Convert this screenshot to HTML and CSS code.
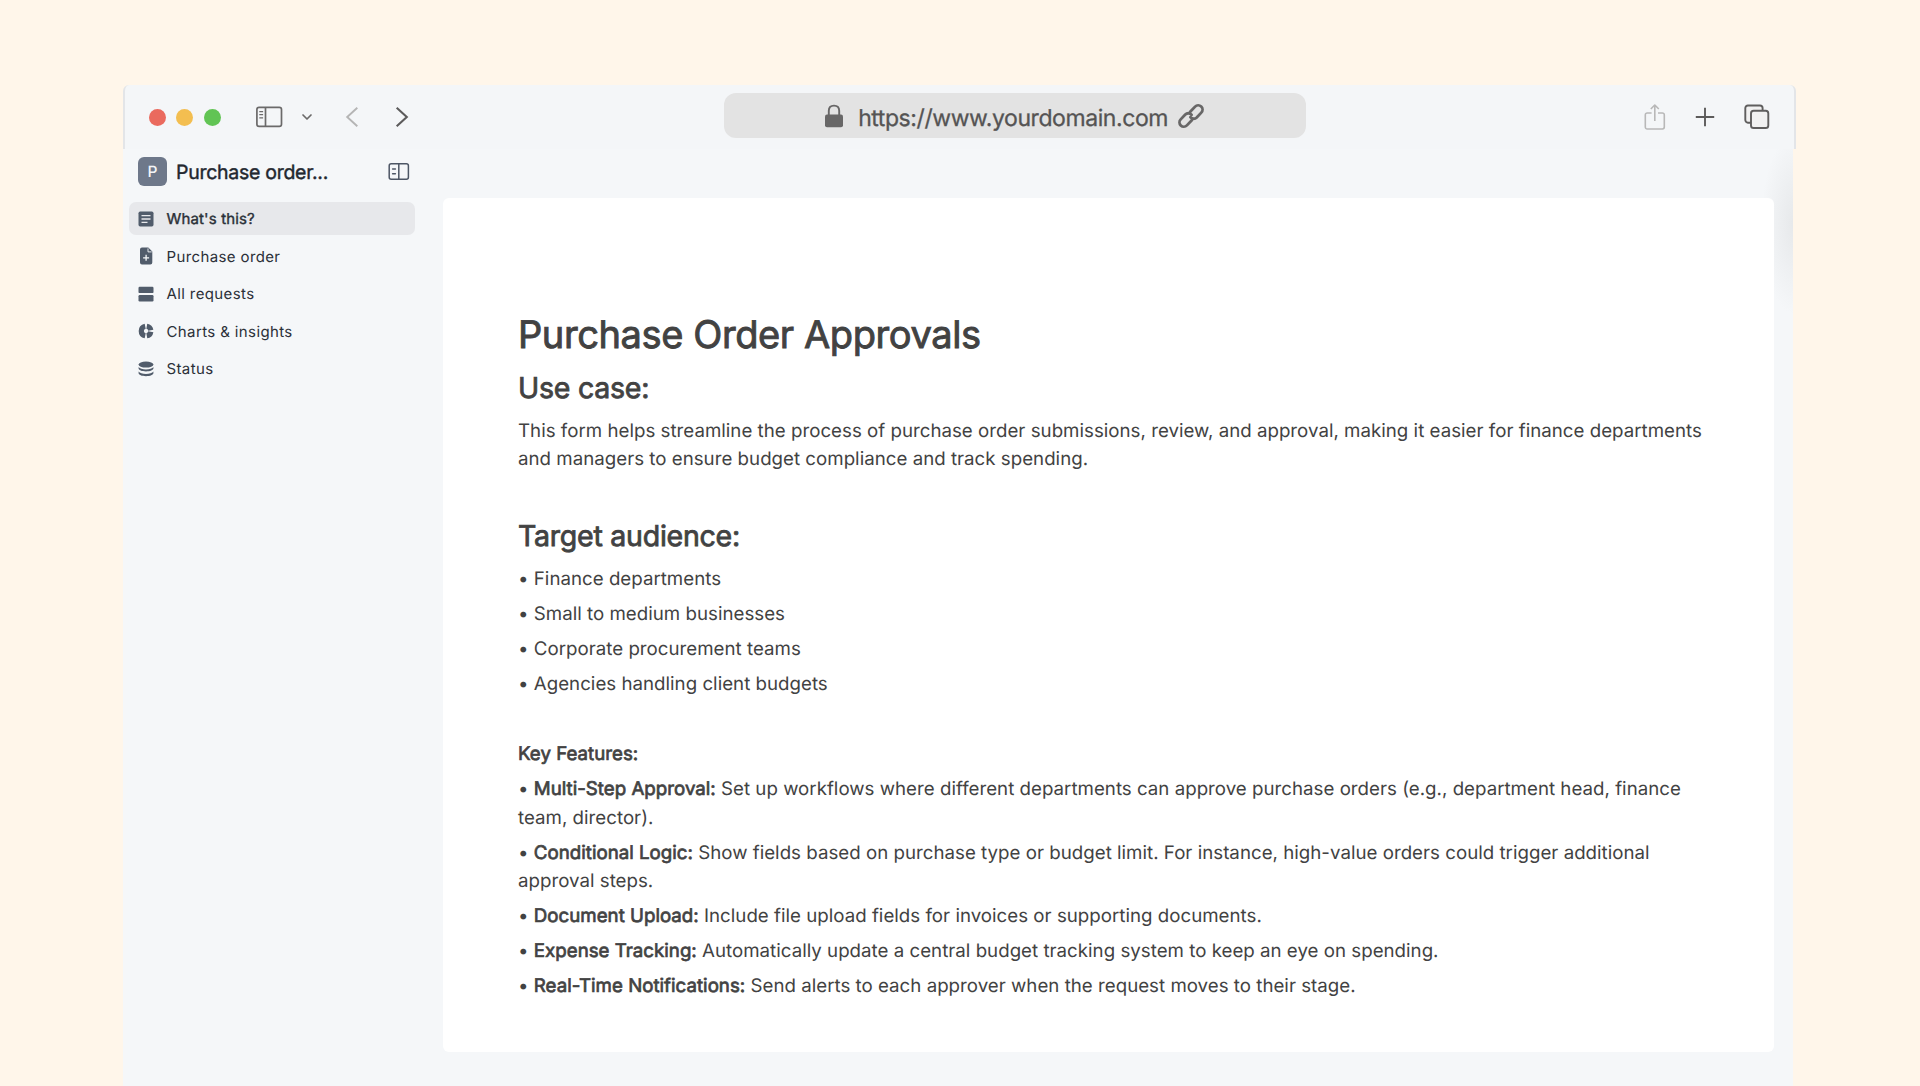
FILE: index.html
```
<!DOCTYPE html>
<html lang="en">
<head>
<meta charset="UTF-8">
<meta name="viewport" content="width=device-width, initial-scale=1.0">
<title>Purchase Order Approvals</title>
<link rel="stylesheet" href="styles.css">
</head>
<body>
<div class="window">
  <header class="toolbar">
    <div class="dots">
      <span class="dot red"></span>
      <span class="dot yellow"></span>
      <span class="dot green"></span>
    </div>
    <svg class="icon-sidebar" width="28" height="22" viewBox="0 0 28 22" fill="none" stroke="#6b6a6a" stroke-width="1.7">
      <rect x="1.9" y="1.4" width="24.6" height="19" rx="2.2"/>
      <path d="M10.5 1.4v19"/>
      <path d="M4.3 5.6h3.8M4.3 8.7h3.8M4.3 11.8h3.8" stroke-width="1.2"/>
    </svg>
    <svg class="icon-chevron" width="12" height="8" viewBox="0 0 12 8" fill="none" stroke="#6b6a6a" stroke-width="1.7" stroke-linecap="round" stroke-linejoin="round">
      <path d="M2 2l4 4 4-4"/>
    </svg>
    <svg class="icon-back" width="14" height="22" viewBox="0 0 14 22" fill="none" stroke="#b5b5b5" stroke-width="1.9">
      <path d="M12.3 1.8L2.2 11l10.1 9.2"/>
    </svg>
    <svg class="icon-forward" width="14" height="22" viewBox="0 0 14 22" fill="none" stroke="#5c5b5b" stroke-width="2.1">
      <path d="M1.7 1.8L11.8 11 1.7 20.2"/>
    </svg>
    <div class="url-bar">
      <svg width="20" height="24" viewBox="0 0 20 24">
        <rect x="1" y="10.5" width="18" height="12.8" rx="2" fill="#686767"/>
        <path d="M4.8 11V6.8C4.8 3.5 7 1.6 10 1.6s5.2 1.9 5.2 5.2V11" fill="none" stroke="#686767" stroke-width="1.9"/>
      </svg>
      <span class="url">https://www.yourdomain.com</span>
      <svg width="28" height="28" viewBox="0 0 28 28" fill="none" stroke="#686767" stroke-width="2.8" stroke-linecap="round" stroke-linejoin="round">
        <path d="M13.2 9.8l4.9-5.2a4.3 4.3 0 0 1 6.2 6l-4.6 4.9c-1.8 1.800-4.800 1.700-6.300-.4"/>
        <path d="M14.8 18.2l-4.900 5.200a4.300 4.300 0 0 1-6.200-6l4.600-4.900c1.800-1.800 4.800-1.700 6.300.4"/>
      </svg>
    </div>
    <div class="actions">
      <svg class="icon-share" width="22" height="28" viewBox="0 0 22 28" fill="none" stroke="#b8b8b8" stroke-width="1.6" stroke-linejoin="round">
        <path d="M7.6 10H3.2A1.9 1.9 0 0 0 1.3 11.9v12.2A1.9 1.9 0 0 0 3.2 26h15.2a1.9 1.9 0 0 0 1.9-1.9V11.9A1.9 1.9 0 0 0 18.4 10H14"/>
        <path d="M10.8 18V2.3M6.8 6l4-4 4 4"/>
      </svg>
      <svg class="icon-plus" width="20" height="20" viewBox="0 0 20 20" stroke="#5c5b5b" stroke-width="1.9">
        <path d="M10 .8v18.4M.8 10h18.4"/>
      </svg>
      <svg class="icon-tabs" width="26" height="26" viewBox="0 0 26 26" fill="#f1f1f1" stroke="#5f5e5e" stroke-width="1.9">
        <rect x="1.3" y="1.5" width="17.3" height="17.2" rx="2.6"/>
        <rect x="7" y="6.8" width="17.3" height="17.2" rx="2.6"/>
      </svg>
    </div>
  </header>
  <div class="content">
    <aside class="sidebar">
      <div class="workspace">
        <span class="avatar">P</span>
        <span class="workspace-name">Purchase order...</span>
        <svg width="22" height="19" viewBox="0 0 22 19" fill="none" stroke="#4d5665" stroke-width="1.5" stroke-linecap="round">
          <rect x="1.2" y="1.7" width="19.2" height="15.6" rx="2"/>
          <path d="M10.8 1.7v15.6M4.6 6.9h2.8M4.6 11.7h2.8"/>
        </svg>
      </div>
      <nav class="menu">
        <a class="item active">
          <svg width="16" height="16" viewBox="0 0 16 16"><rect x=".5" y=".5" width="15" height="15" rx="1.7" fill="#515c6b"/><path d="M3.5 4.7h9M3.5 8h9M3.5 11.3h6" stroke="#e7e8eb" stroke-width="1.3"/></svg>
          What's this?
        </a>
        <a class="item">
          <svg width="16" height="18" viewBox="0 0 16 18"><path d="M4 .6h6.3l4 4v10.8a2 2 0 0 1-2 2H4a2 2 0 0 1-2-2V2.600a2 2 0 0 1 2-2z" fill="#515c6b"/><path d="M10 1.4v3.5h3.7" fill="none" stroke="#f5f7f9" stroke-width=".9"/><path d="M8.1 7.8v6M5.1 10.8h6" stroke="#f5f7f9" stroke-width="1.3"/></svg>
          Purchase order
        </a>
        <a class="item">
          <svg width="16" height="16" viewBox="0 0 16 16" fill="#515c6b"><rect x=".5" y=".7" width="15" height="6.4" rx="1.2"/><rect x=".5" y="9" width="15" height="6.4" rx="1.2"/></svg>
          All requests
        </a>
        <a class="item">
          <svg width="16" height="16" viewBox="0 0 16 16" fill="none" stroke="#515c6b" stroke-width="5.2"><path d="M7.2 3.2a4.9 4.9 0 0 0 0 9.600M8.800 12.800a4.900 4.900 0 0 0 4-4M12.800 7.200a4.900 4.900 0 0 0-4-4"/></svg>
          Charts &amp; insights
        </a>
        <a class="item">
          <svg width="16" height="16" viewBox="0 0 16 16" fill="#515c6b"><ellipse cx="8" cy="3.6" rx="7.4" ry="3"/><path d="M.6 6c1 1.5 4 2.4 7.4 2.4s6.400-.9 7.400-2.400v1.600c0 1.500-3.200 2.900-7.400 2.900S.6 9.100.6 7.600zM.6 10.500c1 1.500 4 2.400 7.400 2.400s6.400-.9 7.400-2.400v1.800c0 1.500-3.200 2.900-7.400 2.900S.6 13.800.6 12.300z"/></svg>
          Status
        </a>
      </nav>
    </aside>
    <main class="card">
      <h1>Purchase Order Approvals</h1>
      <h2>Use case:</h2>
      <p>This form helps streamline the process of purchase order submissions, review, and approval, making it easier for finance departments<br>and managers to ensure budget compliance and track spending.</p>
      <h2 class="spaced">Target audience:</h2>
      <p>• Finance departments</p>
      <p>• Small to medium businesses</p>
      <p>• Corporate procurement teams</p>
      <p>• Agencies handling client budgets</p>
      <p class="features"><b>Key Features:</b></p>
      <p>• <b>Multi-Step Approval:</b> Set up workflows where different departments can approve purchase orders (e.g., department head, finance<br>team, director).</p>
      <p>• <b>Conditional Logic:</b> Show fields based on purchase type or budget limit. For instance, high-value orders could trigger additional<br>approval steps.</p>
      <p>• <b>Document Upload:</b> Include file upload fields for invoices or supporting documents.</p>
      <p>• <b>Expense Tracking:</b> Automatically update a central budget tracking system to keep an eye on spending.</p>
      <p>• <b>Real-Time Notifications:</b> Send alerts to each approver when the request moves to their stage.</p>
    </main>
  </div>
</div>
</body>
</html>
```
FILE: styles.css
```
* {
  box-sizing: border-box;
}
body {
  margin: 0;
  height: 1086px;
  overflow: hidden;
  background-color: #fff6ea;
  font-family: Inter, "Liberation Sans", sans-serif;
  text-rendering: geometricPrecision;
  color: #424242;
}
svg {
  display: block;
  flex-shrink: 0;
}
.window {
  width: 1673px;
  margin: 85px 0 0 123px;
}
.toolbar {
  display: flex;
  align-items: center;
  height: 64px;
  padding-left: 24px;
  background-color: #f4f6f8;
  border-left: 2px solid #e3e5e8;
  border-right: 2px solid #e3e5e8;
  border-radius: 6px 6px 0 0;
}
.dots {
  display: flex;
  gap: 10.3px;
}
.dot {
  width: 17px;
  height: 17px;
  border-radius: 50%;
}
.red { background-color: #ea6a5e; }
.yellow { background-color: #f3be50; }
.green { background-color: #61c454; }
.icon-sidebar { margin-left: 34px; }
.icon-chevron { margin-left: 18px; }
.icon-back { margin-left: 32px; }
.icon-forward { margin-left: 36px; }
.url-bar {
  display: flex;
  align-items: center;
  justify-content: center;
  width: 582px;
  height: 45px;
  margin-left: 315px;
  margin-top: -3px;
  border-radius: 12px;
  background-color: #e3e3e3;
}
.url {
  margin: 4px 9px 0 14px;
  font-size: 23px;
  letter-spacing: -0.42px;
  color: #555454;
  -webkit-text-stroke: 0.3px #555454;
}
.actions {
  display: flex;
  align-items: center;
  margin: -1px 0 0 auto;
}
.icon-plus { margin-left: 29px; }
.icon-tabs { margin: 0 24px 0 29px; }
.content {
  display: flex;
  width: 1670px;
  height: 937px;
  background: radial-gradient(ellipse 34px 90px at 1672px 75px, #e6e8ea, rgba(245, 247, 249, 0)) #f5f7f9;
}
.sidebar {
  width: 292px;
  padding: 8px 0 0 6px;
}
.workspace {
  display: flex;
  align-items: center;
  width: 281px;
  padding-left: 9px;
}
.avatar {
  width: 29px;
  height: 29px;
  border-radius: 6px;
  background-color: #6e788a;
  color: #f4f5f7;
  font-size: 15.5px;
  font-weight: 500;
  line-height: 29px;
  text-align: center;
}
.workspace-name {
  flex: 1;
  margin-left: 9px;
  font-size: 19.5px;
  letter-spacing: -0.28px;
  color: #22272f;
  -webkit-text-stroke: 0.4px #22272f;
}
.menu {
  display: flex;
  flex-direction: column;
  gap: 4.6px;
  margin-top: 16px;
}
.item {
  display: flex;
  align-items: center;
  gap: 13px;
  width: 286px;
  height: 33px;
  padding-left: 8.5px;
  border-radius: 7px;
  font-size: 15px;
  letter-spacing: 0.38px;
  color: #2b3038;
}
.active {
  background-color: #e7e8eb;
  letter-spacing: 0.15px;
  -webkit-text-stroke: 0.4px #2b3038;
}
.card {
  align-self: flex-start;
  width: 1331px;
  height: 854px;
  margin: 48.5px 0 0 28px;
  padding: 112.5px 0 0 75px;
  border-radius: 6px;
  background-color: #fff;
  white-space: nowrap;
}
h1, h2, p {
  margin: 0;
}
h1 {
  font-size: 38px;
  font-weight: 400;
  line-height: 50px;
  letter-spacing: -0.4px;
  -webkit-text-stroke: 0.9px #424242;
}
h2 {
  margin-top: 9px;
  font-size: 28.5px;
  font-weight: 400;
  line-height: 37px;
  letter-spacing: -0.24px;
  -webkit-text-stroke: 0.8px #424242;
}
.spaced {
  margin-top: 43px;
}
p {
  margin-top: 7px;
  font-size: 18.7px;
  line-height: 28.1px;
  letter-spacing: 0.015px;
}
h2 + p {
  margin-top: 11.4px;
}
.features {
  margin-top: 42px;
}
b {
  font-weight: 400;
  -webkit-text-stroke: 0.7px #424242;
}
```
